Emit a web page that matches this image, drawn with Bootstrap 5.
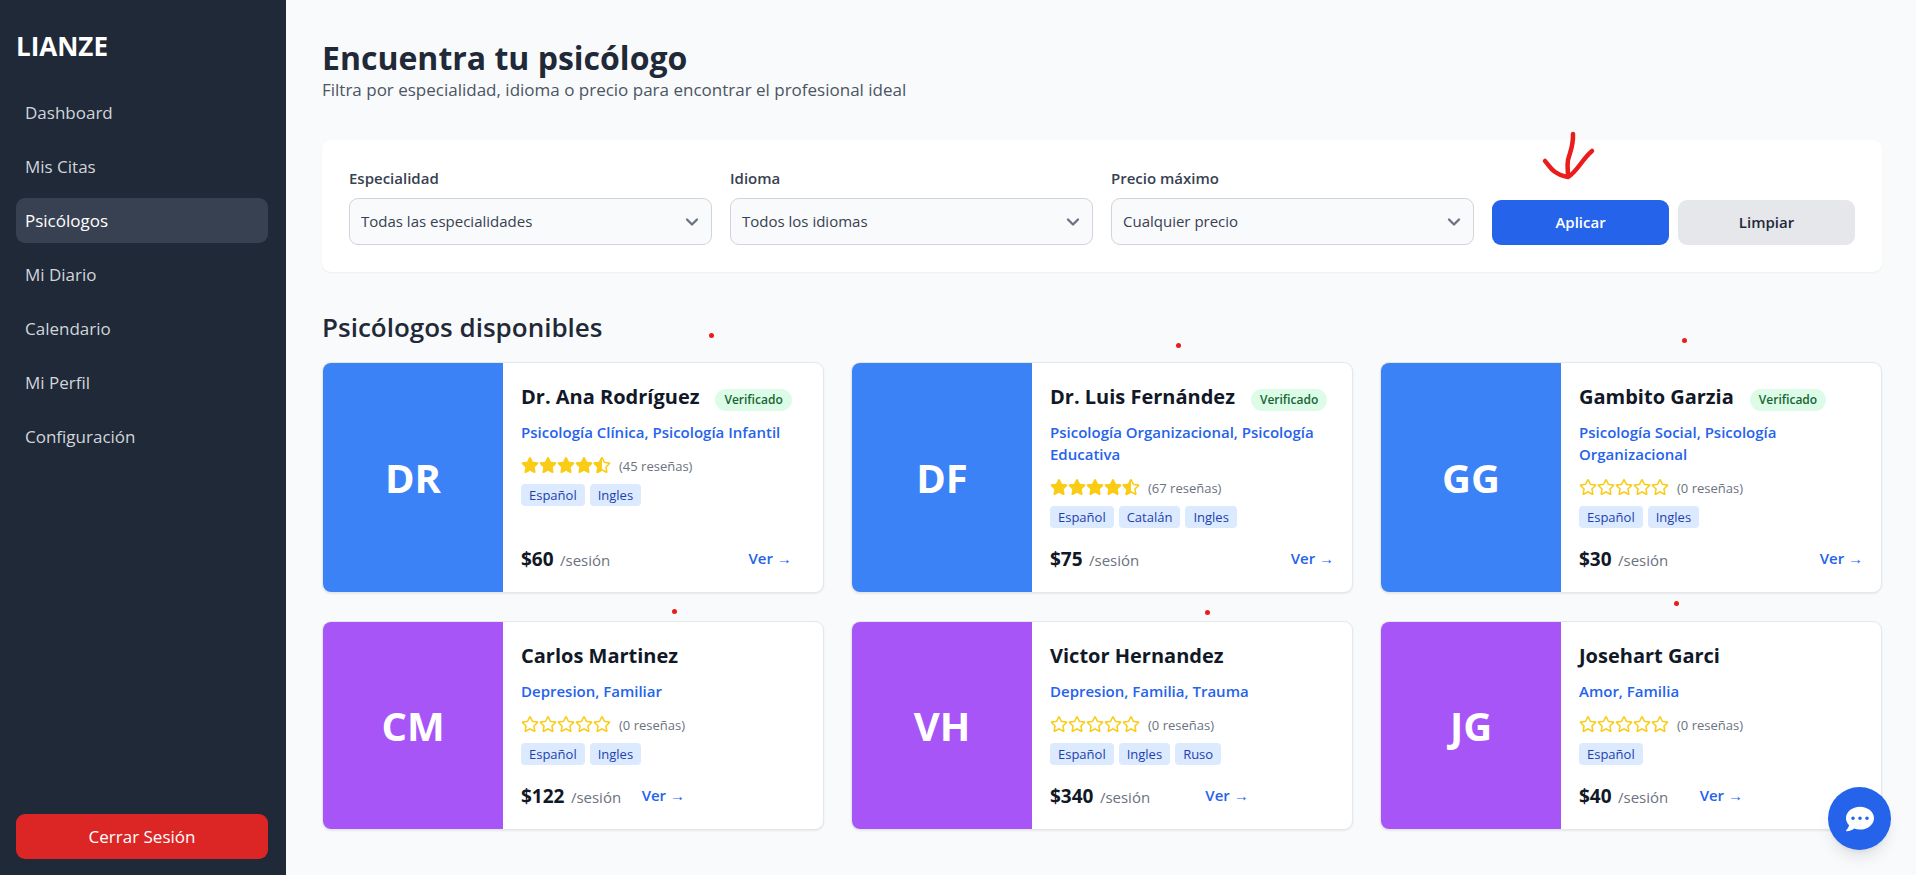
<!DOCTYPE html>
<html lang="es">
<head>
<meta charset="utf-8">
<meta name="viewport" content="width=device-width, initial-scale=1">
<title>LIANZE - Psicólogos</title>
<link href="https://cdn.jsdelivr.net/npm/bootstrap@5.3.0/dist/css/bootstrap.min.css" rel="stylesheet">
<style>
  body { font-family: "Open Sans", "Noto Sans", sans-serif; font-size: 17px; line-height: 27px; background: #f9fafb; color: #1f2937; }

  /* Sidebar */
  .side { width: 286px; background: #1f2937; padding: 28px 18px 16px 16px; }
  .brand { font-size: 26px; line-height: 36px; font-weight: 700; color: #fff; margin-bottom: 26px; text-decoration: none; }
  .menu { gap: 9px; }
  .menu .nav-link { padding: 9px; border-radius: 9px; color: #d1d5db; }
  .menu .nav-link.active { background: #374151; color: #fff; }
  .btn-logout { background: #dc2626; color: #fff; border: 0; border-radius: 9px; padding: 9px; font-size: 17px; line-height: 27px; }

  /* Heading and filters */
  .page { padding: 38px 34px 36px 36px; }
  .page-title { font-size: 32px; line-height: 39px; font-weight: 700; margin: 0; }
  .page-sub { color: #4b5563; line-height: 26px; margin: 0 0 37px; }
  .filters { background: #fff; border-radius: 9px; padding: 27px; box-shadow: 0 1px 2px rgba(0,0,0,.05); gap: 18px; margin-bottom: 37px; }
  .filters > * { flex: 1 1 0; min-width: 200px; }
  .filters label { display: block; font-size: 15px; line-height: 23px; font-weight: 600; color: #374151; margin-bottom: 8px; }
  .filters .form-select { height: 47px; padding: 0 36px 1px 11px; font-size: 15px; color: #374151; border: 1px solid #d1d5db; border-radius: 9px; background-color: #f9fafb; background-position: right 9px center; background-size: 20px 20px;
    background-image: url("data:image/svg+xml,%3csvg xmlns='http://www.w3.org/2000/svg' viewBox='0 0 20 20' fill='none'%3e%3cpath d='M5 7.500l5 5 5-5' stroke='%236b7280' stroke-width='2.300' stroke-linecap='round' stroke-linejoin='round'/%3e%3c/svg%3e"); }
  .actions { gap: 9px; }
  .actions .btn { flex: 1 1 0; height: 45px; border: 0; border-radius: 9px; font-size: 15px; font-weight: 600; padding: 0 9px; }
  .btn-apply { background: #2563eb; color: #fff; }
  .btn-clear { background: #e5e7eb; color: #1f2937; }
  .section-title { font-size: 26px; line-height: 36px; font-weight: 600; margin: 0 0 17px; }

  /* Psychologist cards */
  .people { display: grid; grid-template-columns: repeat(auto-fill, minmax(460px, 1fr)); gap: 28px 27px; }
  .person { background: #fff; border: 1px solid #e5e7eb; border-radius: 9px; box-shadow: 0 1px 2px rgba(0,0,0,.08); }
  .initials { flex: 0 0 180px; color: #fff; font-size: 40px; font-weight: 700; }
  .tone-blue { background: #3b82f6; }
  .tone-purple { background: #a855f7; }
  .info { padding: 18px; }
  .person-name { font-size: 20px; line-height: 32px; font-weight: 700; color: #111827; margin: 0 0 8px; gap: 16px; }
  .verified { background: #dcfce7; color: #166534; font-size: 12px; line-height: 22px; font-weight: 600; border-radius: 11px; padding: 0 9px; margin-top: 5px; }
  .topics { color: #2563eb; font-size: 15px; line-height: 22px; font-weight: 600; margin: 0 0 9px; }
  .rating { height: 26px; gap: 8px; margin-bottom: 6px; }
  .rating svg { width: 18px; height: 16px; fill: #facc15; display: block; }
  .reviews { color: #6b7280; font-size: 13px; line-height: 20px; padding-top: 2px; }
  .langs { gap: 5px; margin-bottom: 17px; }
  .lang { background: #dbeafe; color: #1e40af; font-size: 13px; line-height: 22px; border-radius: 4px; padding: 0 8px; }
  .foot { gap: 18px; line-height: 28px; }
  .price { font-size: 19px; font-weight: 700; color: #111827; margin-right: 2px; }
  .per { font-size: 15px; color: #6b7280; }
  .go { font-size: 15px; line-height: 27px; font-weight: 600; color: #2563eb; text-decoration: none; white-space: nowrap; }

  /* Pen marks over the page */
  .pen-dot { position: absolute; width: 5px; height: 5px; border-radius: 50%; background: #ea1c1c; }
  .m1 { left: 387px; top: -29px; } .m2 { left: 325px; top: -19px; } .m3 { left: 302px; top: -24px; }
  .m4 { left: 350px; top: -12px; } .m5 { left: 354px; top: -11px; } .m6 { left: 294px; top: -20px; }
  .pen-arrow { position: absolute; left: 49px; top: -70px; width: 56px; height: 52px; pointer-events: none; }

  .chat { right: 25px; bottom: 25px; width: 63px; height: 63px; border: 0; border-radius: 50%; background: #2563eb; box-shadow: 0 10px 15px -3px rgba(0,0,0,.1), 0 4px 6px -4px rgba(0,0,0,.1); }
  .chat svg { width: 28px; height: 28px; fill: #fff; }
</style>
</head>
<body>
<svg class="d-none" aria-hidden="true">
  <symbol id="star-full" viewBox="0 0 576 512"><path d="M259.300 17.800L194 150.200 47.900 171.500c-26.200 3.800-36.700 36.100-17.700 54.600l105.700 103-25 145.500c-4.500 26.300 23.200 46 46.400 33.700L288 439.600l130.700 68.700c23.200 12.200 50.900-7.400 46.400-33.700l-25-145.500 105.700-103c19-18.500 8.500-50.800-17.700-54.600L382 150.200 316.700 17.800c-11.700-23.600-45.600-23.900-57.400 0z"/></symbol>
  <symbol id="star-empty" viewBox="0 0 576 512"><path d="M528.100 171.500L382 150.200 316.700 17.800c-11.700-23.600-45.600-23.900-57.400 0L194 150.200 47.900 171.500c-26.200 3.800-36.700 36.100-17.700 54.600l105.700 103-25 145.500c-4.500 26.300 23.200 46 46.400 33.700L288 439.600l130.700 68.700c23.200 12.200 50.900-7.400 46.400-33.700l-25-145.500 105.700-103c19-18.500 8.500-50.800-17.700-54.600zM388.600 312.300l23.700 138.400L288 385.400l-124.300 65.300 23.700-138.400-100.600-98 139-20.200 62.200-126 62.200 126 139 20.200-100.600 98z"/></symbol>
  <symbol id="star-half" viewBox="0 0 576 512"><use href="#star-empty" width="576" height="512"/><path d="M288 0c-11.400.1-22.800 5.900-28.700 17.800L194 150.200 47.900 171.400c-26.200 3.800-36.700 36.100-17.700 54.600l105.700 103-25 145.500c-4.500 26.100 23 46 46.400 33.700L288 439.600V0z"/></symbol>
</svg>

<div class="d-flex min-vh-100">
  <aside class="side d-flex flex-column flex-shrink-0">
    <a class="brand" href="#">LIANZE</a>
    <nav class="menu nav flex-column">
      <a class="nav-link" href="#">Dashboard</a>
      <a class="nav-link" href="#">Mis Citas</a>
      <a class="nav-link active" aria-current="page" href="#">Psicólogos</a>
      <a class="nav-link" href="#">Mi Diario</a>
      <a class="nav-link" href="#">Calendario</a>
      <a class="nav-link" href="#">Mi Perfil</a>
      <a class="nav-link" href="#">Configuración</a>
    </nav>
    <button type="button" class="btn btn-logout mt-auto w-100">Cerrar Sesión</button>
  </aside>

  <main class="page flex-grow-1">
    <h1 class="page-title">Encuentra tu psicólogo</h1>
    <p class="page-sub">Filtra por especialidad, idioma o precio para encontrar el profesional ideal</p>

    <form class="filters d-flex flex-wrap align-items-end">
      <div>
        <label for="especialidad">Especialidad</label>
        <select id="especialidad" class="form-select"><option>Todas las especialidades</option></select>
      </div>
      <div>
        <label for="idioma">Idioma</label>
        <select id="idioma" class="form-select"><option>Todos los idiomas</option></select>
      </div>
      <div>
        <label for="precio">Precio máximo</label>
        <select id="precio" class="form-select"><option>Cualquier precio</option></select>
      </div>
      <div class="actions d-flex position-relative">
        <button type="button" class="btn btn-apply">Aplicar</button>
        <button type="reset" class="btn btn-clear">Limpiar</button>
        <svg class="pen-arrow" viewBox="0 0 56 52" fill="none" stroke="#ea1c1c" stroke-width="4.500" stroke-linecap="round" stroke-linejoin="round" aria-hidden="true">
          <path d="M32 4C32.500 16 29 22 27 30C26 36 27 40 27 46"/>
          <path d="M4 31C9 36 11 44 27 47C36 42 42 28 51 21"/>
        </svg>
      </div>
    </form>

    <h2 class="section-title">Psicólogos disponibles</h2>
    <div class="people">
      <div class="position-relative d-flex">
        <article class="person d-flex overflow-hidden w-100">
          <div class="initials tone-blue d-flex align-items-center justify-content-center">DR</div>
          <div class="info d-flex flex-column">
            <h3 class="person-name d-flex align-items-center">Dr. Ana Rodríguez <span class="verified">Verificado</span></h3>
            <p class="topics">Psicología Clínica, Psicología Infantil</p>
            <div class="rating d-flex align-items-center"><span class="d-flex"><svg><use href="#star-full"/></svg><svg><use href="#star-full"/></svg><svg><use href="#star-full"/></svg><svg><use href="#star-full"/></svg><svg><use href="#star-half"/></svg></span><span class="reviews">(45 reseñas)</span></div>
            <div class="langs d-flex"><span class="lang">Español</span><span class="lang">Ingles</span></div>
            <div class="foot d-flex justify-content-between mt-auto"><div><span class="price">$60</span> <span class="per">/sesión</span></div><a class="go" href="#">Ver →</a></div>
          </div>
        </article>
        <span class="pen-dot m1"></span>
      </div>
      <div class="position-relative d-flex">
        <article class="person d-flex overflow-hidden w-100">
          <div class="initials tone-blue d-flex align-items-center justify-content-center">DF</div>
          <div class="info d-flex flex-column">
            <h3 class="person-name d-flex align-items-center">Dr. Luis Fernández <span class="verified">Verificado</span></h3>
            <p class="topics">Psicología Organizacional, Psicología Educativa</p>
            <div class="rating d-flex align-items-center"><span class="d-flex"><svg><use href="#star-full"/></svg><svg><use href="#star-full"/></svg><svg><use href="#star-full"/></svg><svg><use href="#star-full"/></svg><svg><use href="#star-half"/></svg></span><span class="reviews">(67 reseñas)</span></div>
            <div class="langs d-flex"><span class="lang">Español</span><span class="lang">Catalán</span><span class="lang">Ingles</span></div>
            <div class="foot d-flex justify-content-between mt-auto"><div><span class="price">$75</span> <span class="per">/sesión</span></div><a class="go" href="#">Ver →</a></div>
          </div>
        </article>
        <span class="pen-dot m2"></span>
      </div>
      <div class="position-relative d-flex">
        <article class="person d-flex overflow-hidden w-100">
          <div class="initials tone-blue d-flex align-items-center justify-content-center">GG</div>
          <div class="info d-flex flex-column">
            <h3 class="person-name d-flex align-items-center">Gambito Garzia <span class="verified">Verificado</span></h3>
            <p class="topics">Psicología Social, Psicología Organizacional</p>
            <div class="rating d-flex align-items-center"><span class="d-flex"><svg><use href="#star-empty"/></svg><svg><use href="#star-empty"/></svg><svg><use href="#star-empty"/></svg><svg><use href="#star-empty"/></svg><svg><use href="#star-empty"/></svg></span><span class="reviews">(0 reseñas)</span></div>
            <div class="langs d-flex"><span class="lang">Español</span><span class="lang">Ingles</span></div>
            <div class="foot d-flex justify-content-between mt-auto"><div><span class="price">$30</span> <span class="per">/sesión</span></div><a class="go" href="#">Ver →</a></div>
          </div>
        </article>
        <span class="pen-dot m3"></span>
      </div>
      <div class="position-relative d-flex">
        <article class="person d-flex overflow-hidden w-100">
          <div class="initials tone-purple d-flex align-items-center justify-content-center">CM</div>
          <div class="info d-flex flex-column">
            <h3 class="person-name">Carlos Martinez</h3>
            <p class="topics">Depresion, Familiar</p>
            <div class="rating d-flex align-items-center"><span class="d-flex"><svg><use href="#star-empty"/></svg><svg><use href="#star-empty"/></svg><svg><use href="#star-empty"/></svg><svg><use href="#star-empty"/></svg><svg><use href="#star-empty"/></svg></span><span class="reviews">(0 reseñas)</span></div>
            <div class="langs d-flex"><span class="lang">Español</span><span class="lang">Ingles</span></div>
            <div class="foot d-flex justify-content-between mt-auto"><div><span class="price">$122</span> <span class="per">/sesión</span></div><a class="go" href="#">Ver →</a></div>
          </div>
        </article>
        <span class="pen-dot m4"></span>
      </div>
      <div class="position-relative d-flex">
        <article class="person d-flex overflow-hidden w-100">
          <div class="initials tone-purple d-flex align-items-center justify-content-center">VH</div>
          <div class="info d-flex flex-column">
            <h3 class="person-name">Victor Hernandez</h3>
            <p class="topics">Depresion, Familia, Trauma</p>
            <div class="rating d-flex align-items-center"><span class="d-flex"><svg><use href="#star-empty"/></svg><svg><use href="#star-empty"/></svg><svg><use href="#star-empty"/></svg><svg><use href="#star-empty"/></svg><svg><use href="#star-empty"/></svg></span><span class="reviews">(0 reseñas)</span></div>
            <div class="langs d-flex"><span class="lang">Español</span><span class="lang">Ingles</span><span class="lang">Ruso</span></div>
            <div class="foot d-flex justify-content-between mt-auto"><div><span class="price">$340</span> <span class="per">/sesión</span></div><a class="go" href="#">Ver →</a></div>
          </div>
        </article>
        <span class="pen-dot m5"></span>
      </div>
      <div class="position-relative d-flex">
        <article class="person d-flex overflow-hidden w-100">
          <div class="initials tone-purple d-flex align-items-center justify-content-center">JG</div>
          <div class="info d-flex flex-column">
            <h3 class="person-name">Josehart Garci</h3>
            <p class="topics">Amor, Familia</p>
            <div class="rating d-flex align-items-center"><span class="d-flex"><svg><use href="#star-empty"/></svg><svg><use href="#star-empty"/></svg><svg><use href="#star-empty"/></svg><svg><use href="#star-empty"/></svg><svg><use href="#star-empty"/></svg></span><span class="reviews">(0 reseñas)</span></div>
            <div class="langs d-flex"><span class="lang">Español</span></div>
            <div class="foot d-flex justify-content-between mt-auto"><div><span class="price">$40</span> <span class="per">/sesión</span></div><a class="go" href="#">Ver →</a></div>
          </div>
        </article>
        <span class="pen-dot m6"></span>
      </div>
    </div>
  </main>
</div>

<button type="button" class="chat position-fixed d-flex align-items-center justify-content-center p-0" aria-label="Abrir chat">
  <svg viewBox="0 0 512 512" aria-hidden="true"><path fill-rule="evenodd" d="M256 32C114.600 32 0 125.100 0 240c0 49.600 21.400 95 57 130.700C44.500 421.100 2.700 466 2.200 466.500c-2.200 2.300-2.800 5.700-1.500 8.700S4.800 480 8 480c66.300 0 116-31.800 140.600-51.400 32.700 12.300 69 19.400 107.400 19.400 141.400 0 256-93.100 256-208S397.400 32 256 32zM128 272c-17.700 0-32-14.300-32-32s14.300-32 32-32 32 14.300 32 32-14.300 32-32 32zm128 0c-17.700 0-32-14.300-32-32s14.300-32 32-32 32 14.300 32 32-14.300 32-32 32zm128 0c-17.700 0-32-14.300-32-32s14.300-32 32-32 32 14.300 32 32-14.300 32-32 32z"/></svg>
</button>
<script src="https://cdn.jsdelivr.net/npm/bootstrap@5.3.0/dist/js/bootstrap.bundle.min.js"></script>
</body>
</html>
